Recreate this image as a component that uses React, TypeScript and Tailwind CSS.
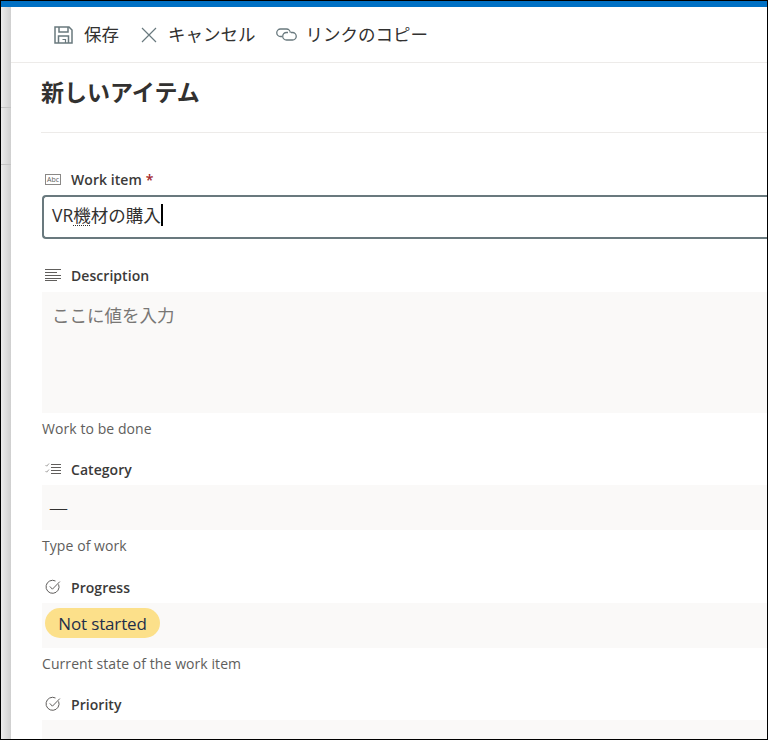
import React from "react";

const font = "font-['Segoe_UI','Open_Sans','Noto_Sans_CJK_JP',sans-serif]";

function SaveIcon() {
  return (
    <svg width="19" height="18" viewBox="0 0 19 18" fill="none" stroke="#69797e" strokeWidth="1.5">
      <path d="M1 1h14l3 3v13H1z" />
      <path d="M5 1v5h9V1M4.5 17v-7h10v7" />
      <path d="M8.5 13.5h3V17" strokeWidth="1.2" />
    </svg>
  );
}
function CloseIcon() {
  return (
    <svg width="16" height="16" viewBox="0 0 16 16" fill="none" stroke="#69797e" strokeWidth="1.2">
      <path d="M1 1l14 14M15 1L1 15" />
    </svg>
  );
}
function LinkIcon() {
  return (
    <svg width="21" height="13" viewBox="0 0 21 13" fill="none" stroke="#69797e" strokeWidth="1.3">
      <path d="M6 8.5H4.5a3.7 3.7 0 0 1 0-7.5h6a3.8 3.8 0 0 1 3.8 3.8" />
      <path d="M15 4.5h1.5a3.7 3.7 0 0 1 0 7.5h-6a3.8 3.8 0 0 1-3.8-3.8 3.8 3.8 0 0 1 3.8-3.7h1.5" />
    </svg>
  );
}
function TextIcon() {
  return (
    <svg width="16" height="11" viewBox="0 0 16 11" fill="none">
      <rect x="0.5" y="0.5" width="15" height="10" stroke="#8a8886" />
      <text x="8" y="8" textAnchor="middle" fontSize="7" fill="#605e5c" fontFamily="Open Sans">Abc</text>
    </svg>
  );
}
function LinesIcon() {
  return (
    <svg width="16" height="12" viewBox="0 0 16 12" fill="none" stroke="#605e5c" strokeWidth="1">
      <path d="M0 .5h16M0 3.5h12M0 6.5h16M0 9.5h16M0 11.5h12" />
    </svg>
  );
}
function ChoiceIcon() {
  return (
    <svg width="16" height="12" viewBox="0 0 16 12" fill="none" stroke="#605e5c" strokeWidth="1">
      <path d="M6 1.5h10M6 4.5h10M6 7.5h10M6 10.5h10" />
      <path d="M.5 2l1.2 1.2L4 .5M.5 8l1.2 1.2L4 6.5" stroke="#8a8886" strokeWidth=".8" />
    </svg>
  );
}
function StatusIcon() {
  return (
    <svg width="16" height="16" viewBox="0 0 16 16" fill="none" stroke="#605e5c" strokeWidth="1">
      <path d="M13.6 5.4A6.5 6.5 0 1 1 10.5 2" />
      <path d="M4.8 7.4l2.6 2.8L14.8 2.6" />
    </svg>
  );
}

function Label({ icon, text, required }: { icon: React.ReactNode; text: string; required?: boolean }) {
  return (
    <div className="flex items-center h-5 pl-[3px]">
      <span className="w-[26px] flex items-center shrink-0">{icon}</span>
      <span className="text-[14px] font-semibold tracking-[0.05px] text-[#3b3a39]">{text}</span>
      {required && <span className="ml-1 text-[14px] font-semibold text-[#a4262c]">*</span>}
    </div>
  );
}

function Hint({ text }: { text: string }) {
  return <div className="text-[14px] leading-5 tracking-[0.07px] text-[#605e5c]">{text}</div>;
}

export default function App() {
  return (
    <div className={`w-[768px] h-[740px] overflow-hidden bg-black p-px ${font}`}>
      <div className="h-full bg-white flex flex-col overflow-hidden">
        <div className="h-[6px] shrink-0 bg-[#0070c4]" />
        <div className="flex-1 flex min-h-0">
          <div className="relative w-[10px] shrink-0 bg-gradient-to-r from-[#ececec] to-[#cfcfcf]">
            <div className="absolute left-0 right-0 top-[100px] h-px bg-[#c4c4c4]" />
            <div className="absolute left-0 right-0 top-[157px] h-px bg-[#c4c4c4]" />
          </div>
          <div className="flex-1 min-w-0">
            <div className="h-[55px] flex items-center pl-[43px] text-[17.5px] text-[#323130] border-b border-[#edebe9] box-content">
              <span className="flex items-center">
                <SaveIcon />
                <span className="ml-[11px]">保存</span>
              </span>
              <span className="flex items-center ml-[22px]">
                <CloseIcon />
                <span className="ml-[11px]">キャンセル</span>
              </span>
              <span className="flex items-center ml-[20px]">
                <LinkIcon />
                <span className="ml-[9px]">リンクのコピー</span>
              </span>
            </div>
            <div className="pl-[30px]">
              <div className="h-[57px] pb-[12px] flex items-center border-b border-[#edebe9] box-content">
                <h1 className="text-[23px] leading-[30px] font-bold text-[#323130]">新しいアイテム</h1>
              </div>
              <div className="pt-[36px] ml-px">
                <Label icon={<TextIcon />} text="Work item" required />
                <div className="mt-[6px] h-[44px] flex items-center border-2 border-r-0 border-[#69797e] rounded-l-sm pl-[8px] pb-[4px] text-[17.5px] text-[#323130]">
                  <span>VR<span className="underline decoration-dotted decoration-1 decoration-[#323130] underline-offset-3">機</span>材の購入</span>
                  <span className="w-[2px] h-[22px] bg-black" />
                </div>
                <div className="mt-[26px]"><Label icon={<LinesIcon />} text="Description" /></div>
                <div className="mt-[7px] h-[121px] bg-[#faf9f8] pl-[10px] pt-[10px] text-[17.5px] text-[#797775]">ここに値を入力</div>
                <div className="mt-[6px]"><Hint text="Work to be done" /></div>
                <div className="mt-[20px]"><Label icon={<ChoiceIcon />} text="Category" /></div>
                <div className="mt-[6px] h-[45px] bg-[#faf9f8] flex items-center pl-[7px] pt-[2px] text-[19px] font-light text-[#323130]">—</div>
                <div className="mt-[6px]"><Hint text="Type of work" /></div>
                <div className="mt-[21px]"><Label icon={<StatusIcon />} text="Progress" /></div>
                <div className="mt-[6px] h-[45px] bg-[#faf9f8] flex items-center pl-[3px] pb-[5px]">
                  <span className="h-[30px] w-[115px] rounded-full bg-[#fce08a] flex items-center justify-center pt-[1px] text-[17px] tracking-[-0.15px] text-[#1f2f4a]">Not started</span>
                </div>
                <div className="mt-[6px]"><Hint text="Current state of the work item" /></div>
                <div className="mt-[20px]"><Label icon={<StatusIcon />} text="Priority" /></div>
                <div className="mt-[6px] h-[45px] bg-[#faf9f8]" />
              </div>
            </div>
          </div>
        </div>
      </div>
    </div>
  );
}
